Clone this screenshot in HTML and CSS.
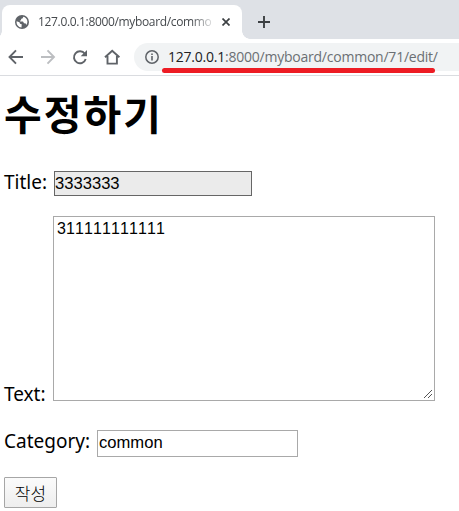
FILE: index.html
```html
<!DOCTYPE html>
<html lang="ko">
<head>
<meta charset="utf-8">
<title>수정하기</title>
<link rel="stylesheet" href="styles.css">
</head>
<body>
<header class="browser">
  <div class="tabs">
    <div class="tab">
      <svg class="globe" width="14" height="14" viewBox="0 0 14 14"><circle cx="7" cy="7" r="7" fill="#5f6368"/><path d="M1.6 6.2 4.5 7.2 5 8.7 6.7 9.2 6.5 12.4C3.4 12.2 1.2 9.7 1.6 6.2ZM8.3 1.7 7.7 3.2 6 3.9 6.2 5.2 4.7 5.7 5.3 6.4 8 6.5 9 8.2 10.8 8.5 11.2 10.1C13.3 7.6 12.8 2.8 8.3 1.7Z" fill="#fff"/></svg>
      <span class="tab-title">127.0.0.1:8000/myboard/commo</span>
      <svg class="close" width="8" height="8" viewBox="0 0 8 8"><path d="M.5.5l7 7M7.5.5l-7 7" stroke="#3c4043" stroke-width="1.7"/></svg>
    </div>
    <svg class="plus" width="12" height="12" viewBox="0 0 12 12"><path d="M6 0v12M0 6h12" stroke="#3c4043" stroke-width="1.9"/></svg>
  </div>
  <div class="toolbar">
    <svg width="130" height="37" viewBox="0 0 130 37" fill="none" stroke="#5f6368" stroke-width="1.9">
      <path d="M23 18H10M16 11.3 9.5 18l6.500 6.700"/>
      <path d="M41 18h13M47.500 11.300 54 18l-6.500 6.700" stroke="#bcbec1"/>
      <path d="M84.800 14.700A6 6 0 1 0 85.700 20"/>
      <path d="M87 11v6.300h-6.300z" fill="#5f6368" stroke="none"/>
      <path d="M105 18.300 112.200 11.700l7.200 6.600M107.500 17v7.600h9.400V17"/>
    </svg>
    <div class="address">
      <svg width="14" height="14" viewBox="0 0 14 14"><circle cx="7" cy="7" r="6.200" fill="none" stroke="#5f6368" stroke-width="1.500"/><path d="M7 6v4.500M7 3.400v1.600" stroke="#5f6368" stroke-width="1.600"/></svg>
      <span class="url"><b>127.0.0.1</b>:8000/myboard/common/71/edit/</span>
      <span class="underline"></span>
    </div>
  </div>
</header>
<main>
  <h1>수정하기</h1>
  <form>
    <div class="row title-row"><label for="t">Title:</label><input id="t" class="title" value="3333333" readonly></div>
    <div class="row text-row"><label for="x">Text:</label><div class="area"><textarea id="x">311111111111</textarea><svg class="grip" width="8" height="8" viewBox="0 0 8 8"><path d="M0 8 8 0M4 8l4-4" stroke="#555" stroke-width="1"/></svg></div></div>
    <div class="row category-row"><label for="c">Category:</label><input id="c" class="category" value="common"></div>
    <button type="button">작성</button>
  </form>
</main>
</body>
</html>
```
FILE: styles.css
```css
* { box-sizing: border-box; }
body { margin: 0; width: 459px; height: 511px; overflow: hidden; background: #fff; color: #000; font-family: "Noto Sans", "Noto Sans CJK KR", sans-serif; }
svg { display: block; flex: none; }
.tabs { height: 39px; background: #dee1e6; display: flex; align-items: flex-start; }
.tab { position: relative; width: 240px; height: 34px; margin: 5px 0 0 2px; background: #fff; border-radius: 8px 8px 0 0; display: flex; align-items: center; padding-left: 13px; }
.tab::before, .tab::after { content: ""; position: absolute; bottom: 0; width: 8px; height: 8px; }
.tab::before { left: -8px; background: radial-gradient(circle at 0 0, transparent 7.5px, #fff 8px); }
.tab::after { right: -8px; background: radial-gradient(circle at 100% 0, transparent 7.5px, #fff 8px); }
.tab-title { width: 176px; margin-left: 9px; white-space: nowrap; font: 12px/18px "Open Sans", sans-serif; letter-spacing: -.34px; color: #45494d; -webkit-mask-image: linear-gradient(90deg, #000 153px, transparent 178px); mask-image: linear-gradient(90deg, #000 153px, transparent 178px); }
.close { margin-left: 8px; }
.plus { margin: 16px 0 0 16px; }
.toolbar { height: 37px; border-bottom: 1px solid #dadce0; display: flex; }
.address { position: relative; margin: 4px 0 0 4px; height: 28px; width: 340px; flex: none; border-radius: 14px 0 0 14px; background: #f1f3f4; display: flex; align-items: center; padding-left: 11px; }
.url { margin-left: 9px; white-space: nowrap; font: 14px/20px "Open Sans", sans-serif; letter-spacing: -.23px; color: #6b6f73; }
.url b { font-weight: 400; color: #202124; }
.underline { position: absolute; left: 28px; top: 25px; width: 273px; height: 5px; border-radius: 3px; background: #ed1c24; }
main { padding: 0 4px; }
h1 { margin: 6px 0 0; height: 63px; font: 700 41px/60px "Noto Sans CJK KR", sans-serif; letter-spacing: 2px; }
form { padding-top: 26px; }
.row { display: flex; }
label { font-size: 19px; line-height: 24px; white-space: nowrap; }
input, textarea { border: 1px solid #a9a9a9; border-radius: 0; outline: 0; margin: 0; background: #fff; color: #000; }
input { font: 16.600px "Liberation Sans", sans-serif; }
.title-row label { width: 50px; margin-top: -1px; }
.title { width: 198px; height: 25px; background: #ebebeb; border-color: #666; padding: 0; }
.text-row { margin-top: 20px; align-items: flex-end; }
.text-row label { width: 49px; margin-bottom: -5px; }
.area { position: relative; width: 382px; height: 185px; }
textarea { display: block; width: 100%; height: 100%; resize: none; overflow: hidden; padding: 3px; font: 16px/18px "Liberation Sans", sans-serif; font-kerning: none; letter-spacing: .1px; }
.grip { position: absolute; right: 3px; bottom: 3px; }
.category-row { margin-top: 29px; }
.category-row label { width: 93px; margin-top: -1px; }
.category { width: 201px; height: 27px; padding: 0 1px 2px; }
button { display: block; margin: 20px 0 0; width: 53px; height: 31px; padding: 0; border: 1px solid #a6a6a6; border-radius: 1px; background: linear-gradient(#fbfbfb, #eee); color: #000; font: 300 17px/27px "Noto Sans CJK KR", sans-serif; }
```
